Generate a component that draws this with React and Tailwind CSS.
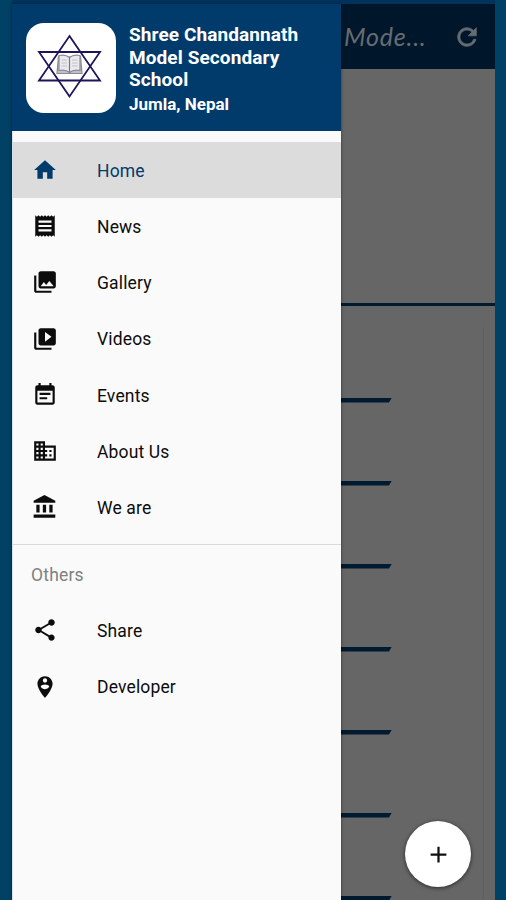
import React from "react";
import {
  MdHome,
  MdReceipt,
  MdPhotoLibrary,
  MdVideoLibrary,
  MdEventNote,
  MdBusiness,
  MdShare,
  MdPersonPinCircle,
  MdRefresh,
  MdAdd,
} from "react-icons/md";

function BankIcon({ className }) {
  return (
    <svg className={className} viewBox="0 0 24 24" fill="currentColor">
      <path d="M11.5 1L1.500 6.300v1.700h20V6.300zM4 10v7h3v-7zM10 10v7h3v-7zM16 10v7h3v-7zM1.500 19v3h20v-3z" />
    </svg>
  );
}

const mainItems = [
  { label: "Home", icon: MdHome, active: true },
  { label: "News", icon: MdReceipt },
  { label: "Gallery", icon: MdPhotoLibrary },
  { label: "Videos", icon: MdVideoLibrary },
  { label: "Events", icon: MdEventNote },
  { label: "About Us", icon: MdBusiness },
  { label: "We are", icon: BankIcon },
];

const otherItems = [
  { label: "Share", icon: MdShare },
  { label: "Developer", icon: MdPersonPinCircle },
];

function Logo() {
  return (
    <div className="flex h-[90px] w-[90px] shrink-0 items-center justify-center rounded-[18px] bg-white">
      <svg width="90" height="90" viewBox="0 0 90 90" fill="none">
        <g stroke="#1c1559" strokeWidth="1.8">
          <path d="M43.5 13 L74 57.5 H13 Z" />
          <path d="M43.5 73.5 L13 29 H74 Z" />
        </g>
        {/* open book */}
        <path d="M32.500 33 L31 50.500 H56 L54.500 33" fill="#c0c0c8" stroke="#8a8a94" strokeWidth="1.200" />
        <path
          d="M33 32.500 Q39.500 31 43.500 34.500 Q47.500 31 54 32.500 V47.500 Q47.500 46 43.500 49.500 Q39.500 46 33 47.500 Z"
          fill="#eaeaee"
          stroke="#8a8a94"
          strokeWidth="1.200"
        />
        <path d="M43.500 34.500 V49.500" stroke="#777784" strokeWidth="1.200" />
        <path d="M35.500 37 H41 M35.500 40 H41 M35.500 43 H41 M46 37 H51.500 M46 40 H51.500 M46 43 H51.500" stroke="#c0c0c8" />
      </svg>
    </div>
  );
}

function MenuItem({ item }) {
  const Icon = item.icon;
  return (
    <li
      className={
        item.active
          ? "flex h-[56.3px] items-center bg-[#dcdcdc] pl-[19px] text-[#003b6b]"
          : "flex h-[56.3px] items-center pl-[19px] text-[#0c0c0c]"
      }
    >
      <Icon className="h-[26px] w-[26px]" />
      <span className="ml-[39px] pt-[2px] text-[17.5px] font-[450] tracking-[0.15px]">
        {item.label}
      </span>
    </li>
  );
}

function Drawer() {
  return (
    <aside className="z-10 flex w-[329px] shrink-0 flex-col border-l border-[#dcdfea] bg-[#fafafa] shadow-[0_0_3px_rgba(0,0,0,0.5)]">
      <header className="-ml-px flex h-[127px] shrink-0 bg-[#003b6b] pt-[19px] pl-[14px] text-white">
        <Logo />
        <div className="ml-[13px] pt-[1px] font-bold">
          <h1 className="w-[190px] text-[19px] leading-[22.5px] tracking-[0.1px]">
            Shree Chandannath Model Secondary School
          </h1>
          <p className="mt-[1px] text-[17px] leading-[22px]">Jumla, Nepal</p>
        </div>
      </header>
      <ul className="pt-[10.5px]">
        {mainItems.map((item) => (
          <MenuItem key={item.label} item={item} />
        ))}
      </ul>
      <div className="mt-[8.500px] border-t border-[#dadada] pt-[19px]">
        <p className="pl-[18px] text-[17.5px] leading-[22px] tracking-[0.2px] text-[#808080]">Others</p>
        <ul className="pt-[16px]">
          {otherItems.map((item) => (
            <MenuItem key={item.label} item={item} />
          ))}
        </ul>
      </div>
    </aside>
  );
}

function Content() {
  return (
    <main className="flex w-[154px] flex-col bg-[#666666]">
      <div className="flex h-[65px] shrink-0 items-center justify-between bg-[#00172b] pr-[14px] pl-[3px] text-[#666c72]">
        <span className="font-['Lato'] text-[25px] tracking-[0.8px] italic">Mode...</span>
        <MdRefresh className="h-[28px] w-[28px] [&_path]:stroke-[0.6] [&_path[fill=none]]:stroke-none" />
      </div>
      <div className="h-[237px] shrink-0 border-b-3 border-[#001a30]" />
      <div className="mt-[21px] mr-[11px] grow overflow-hidden border-r border-[#5e5e5e] pt-[70.5px]">
        {[1, 2, 3, 4, 5, 6, 7].map((n) => (
          <div key={n} className="h-[83px]">
            <div className="h-[5px] w-[51px] bg-[#001a30] [clip-path:polygon(0_0,100%_0,94%_100%,0_100%)]" />
          </div>
        ))}
      </div>
    </main>
  );
}

function App() {
  return (
    <div className="relative flex h-[900px] w-[506px] flex-col overflow-hidden bg-[#004165] pr-[11px] pl-[12px] font-['Roboto',sans-serif]">
      <div className="h-[4px] shrink-0 bg-[#00335c]" />
      <div className="flex min-h-0 grow">
        <Drawer />
        <Content />
      </div>
      <button className="absolute top-[821px] left-[405px] z-20 flex h-[66px] w-[66px] items-center justify-center rounded-full bg-white text-[#111] shadow-[0_1px_4px_rgba(0,0,0,0.6)]">
        <MdAdd className="h-[27px] w-[27px]" />
      </button>
    </div>
  );
}

export default App;
